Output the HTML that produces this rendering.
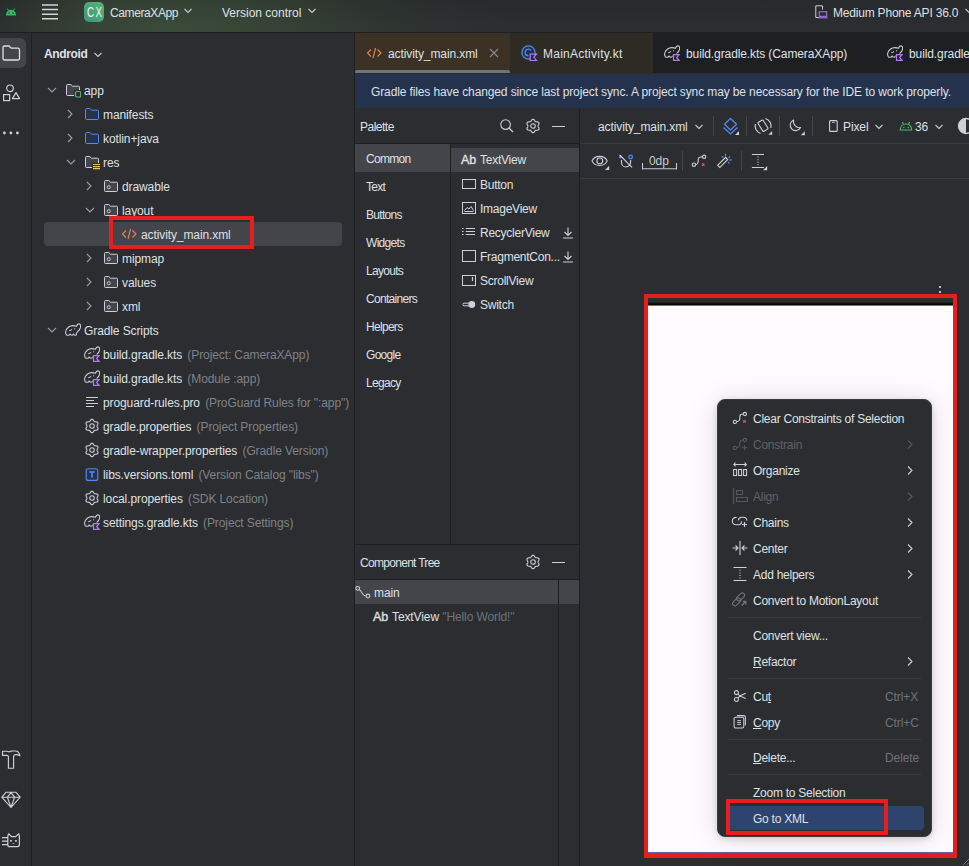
<!DOCTYPE html>
<html><head><meta charset="utf-8">
<style>
*{margin:0;padding:0;box-sizing:border-box}
html,body{width:969px;height:866px;overflow:hidden;background:#2b2d30;font-family:"Liberation Sans",sans-serif;font-size:12px;color:#dfe1e5}
.a{position:absolute}
.t{position:absolute;white-space:nowrap;line-height:14px;height:14px;letter-spacing:-0.1px}
.g{color:#7f838a;margin-left:2px}
.d{color:#6f737a}
svg{position:absolute;overflow:visible;color:#2b2d30}
</style></head><body>
<svg width="0" height="0" style="position:absolute">
<defs>
<symbol id="chd" viewBox="0 0 16 16"><path d="M4 6 L8 10 L12 6" fill="none" stroke="#9a9da3" stroke-width="1.1"/></symbol>
<symbol id="chr" viewBox="0 0 16 16"><path d="M6 4 L10 8 L6 12" fill="none" stroke="#9a9da3" stroke-width="1.1"/></symbol>
<symbol id="fold" viewBox="0 0 16 16"><path d="M1.5 3.5 a1 1 0 0 1 1-1 h3.3 l1.7 1.7 h6 a1 1 0 0 1 1 1 v7.3 a1 1 0 0 1 -1 1 h-11 a1 1 0 0 1 -1-1z" fill="#43454a" stroke="#ced0d6" stroke-width="1"/></symbol>
<symbol id="appf" viewBox="0 0 16 16"><path d="M1.5 3.5 a1 1 0 0 1 1-1 h3.3 l1.7 1.7 h6 a1 1 0 0 1 1 1 v7.3 a1 1 0 0 1 -1 1 h-11 a1 1 0 0 1 -1-1z" fill="#43454a" stroke="#ced0d6" stroke-width="1"/><rect x="9" y="8" width="8" height="8.5" fill="currentColor"/><rect x="10.5" y="9.5" width="5.2" height="5.5" rx="1.2" fill="currentColor" stroke="#5fb865" stroke-width="1.2"/></symbol>
<symbol id="bluef" viewBox="0 0 16 16"><path d="M1.5 3.5 a1 1 0 0 1 1-1 h3.3 l1.7 1.7 h6 a1 1 0 0 1 1 1 v7.3 a1 1 0 0 1 -1 1 h-11 a1 1 0 0 1 -1-1z" fill="#25324d" stroke="#548af7" stroke-width="1"/></symbol>
<symbol id="resf" viewBox="0 0 16 16"><path d="M1.5 3.5 a1 1 0 0 1 1-1 h3.3 l1.7 1.7 h6 a1 1 0 0 1 1 1 v7.3 a1 1 0 0 1 -1 1 h-11 a1 1 0 0 1 -1-1z" fill="#43454a" stroke="#ced0d6" stroke-width="1"/><rect x="8" y="9" width="9" height="7" fill="currentColor"/><path d="M9 10.5 h7 M9 12.6 h7 M9 14.6 h7" stroke="#f2c55c" stroke-width="1.1"/></symbol>
<symbol id="rfold" viewBox="0 0 16 16"><path d="M1.5 3.5 a1 1 0 0 1 1-1 h3.3 l1.7 1.7 h6 a1 1 0 0 1 1 1 v7.3 a1 1 0 0 1 -1 1 h-11 a1 1 0 0 1 -1-1z" fill="#43454a" stroke="#ced0d6" stroke-width="1"/><circle cx="5.7" cy="9.2" r="1.6" fill="none" stroke="#ced0d6" stroke-width="0.9"/></symbol>
<symbol id="xml" viewBox="0 0 16 16"><path d="M5 4.5 L1.5 8 L5 11.5 M11.5 4.5 L15 8 L11.5 11.5 M9.6 3 L7 13" fill="none" stroke="#e08855" stroke-width="1.1"/></symbol>
<symbol id="eleph" viewBox="0 0 16 16"><path d="M1.5 12 C1 9 3 6 6.5 5.5 C9 5.2 10 6 12 5.5 C13 3.5 15.5 3 15.5 5 C15.5 7 14 8 13 8.5 L13 7 M13 8.5 C12.5 10 12 11 11 12.5 L9.5 12.5 L9 10.5 C8 11 6.5 11 5.5 10.5 L5 12.5 L3.5 12.5 L3.5 11 M6 8 C7 7.5 8 8 8.5 7.5" fill="none" stroke="#ced0d6" stroke-width="1"/></symbol>
<symbol id="gradle" viewBox="0 0 16 16"><path d="M1.2 12.6 C0.2 10.5 0.8 7.2 3.6 5 C6 3.2 9 3.4 11.6 4.3 C12 2.4 13.4 1.6 14.6 2 C16 2.6 16 5.4 14.6 7.4 C13.6 8.8 12.3 9.8 11.6 10.8 L11.4 12.6 C10.4 13.6 9.2 13.6 8.6 11.9 C7.6 13.6 5.8 13.6 5.1 11.9 C4.2 13.6 2.2 13.6 1.2 12.6 Z M4.2 8.8 C5.2 8.6 6.2 8 7 7.3" fill="none" stroke="#ced0d6" stroke-width="1.05" stroke-linejoin="round"/><circle cx="9.6" cy="6.8" r="0.6" fill="#ced0d6"/></symbol>
<symbol id="gkts" viewBox="0 0 16 16"><g transform="translate(0 -1)"><path d="M1.2 12.6 C0.2 10.5 0.8 7.2 3.6 5 C6 3.2 9 3.4 11.6 4.3 C12 2.4 13.4 1.6 14.6 2 C16 2.6 16 5.4 14.6 7.4 C13.6 8.8 12.3 9.8 11.6 10.8 L11.4 12.6 C10.4 13.6 9.2 13.6 8.6 11.9 C7.6 13.6 5.8 13.6 5.1 11.9 C4.2 13.6 2.2 13.6 1.2 12.6 Z M4.2 8.8 C5.2 8.6 6.2 8 7 7.3" fill="none" stroke="#ced0d6" stroke-width="1.05" stroke-linejoin="round"/><circle cx="9.6" cy="6.8" r="0.6" fill="#ced0d6"/></g><path d="M8.6 8.6 H16.2 L13.4 12.5 L16.2 16.4 H8.6 Z" fill="currentColor"/><path d="M9.5 9.7 H15 L12.6 12.5 L15 15.3 H9.5 Z" fill="currentColor" stroke="#b07cf0" stroke-width="1.2"/></symbol>
<symbol id="lines" viewBox="0 0 16 16"><path d="M2 3.5 H14 M2 6.5 H10 M2 9.5 H14 M2 12.5 H10" stroke="#ced0d6" stroke-width="1"/></symbol>
<symbol id="gear" viewBox="0 0 16 16"><path d="M13.05 8.00 L13.14 8.45 L13.39 8.95 L13.70 9.53 L13.94 10.16 L14.01 10.80 L13.85 11.38 L13.44 11.81 L12.85 12.07 L12.17 12.17 L11.52 12.19 L10.96 12.23 L10.53 12.37 L10.18 12.68 L9.87 13.14 L9.53 13.70 L9.10 14.23 L8.58 14.61 L8.00 14.75 L7.42 14.61 L6.90 14.23 L6.47 13.70 L6.13 13.14 L5.82 12.68 L5.48 12.37 L5.04 12.23 L4.48 12.19 L3.83 12.17 L3.15 12.07 L2.56 11.81 L2.15 11.38 L1.99 10.80 L2.06 10.16 L2.30 9.53 L2.61 8.95 L2.86 8.45 L2.95 8.00 L2.86 7.55 L2.61 7.05 L2.30 6.47 L2.06 5.84 L1.99 5.20 L2.15 4.62 L2.56 4.19 L3.15 3.93 L3.83 3.83 L4.48 3.81 L5.04 3.77 L5.47 3.63 L5.82 3.32 L6.13 2.86 L6.47 2.30 L6.90 1.77 L7.42 1.39 L8.00 1.25 L8.58 1.39 L9.10 1.77 L9.53 2.30 L9.87 2.86 L10.18 3.32 L10.52 3.63 L10.96 3.77 L11.52 3.81 L12.17 3.83 L12.85 3.93 L13.44 4.19 L13.85 4.63 L14.01 5.20 L13.94 5.84 L13.70 6.47 L13.39 7.05 L13.14 7.55 L13.05 8.00Z" fill="none" stroke="#ced0d6" stroke-width="1.1" stroke-linejoin="round"/><circle cx="8" cy="8" r="2.3" fill="none" stroke="#ced0d6" stroke-width="1.05"/></symbol>
<symbol id="toml" viewBox="0 0 16 16"><rect x="2.2" y="2.8" width="11.6" height="11.6" rx="2" fill="#25324d" stroke="#548af7" stroke-width="1.1"/><path d="M5.2 6 H10.8 M8 6 V11.8" stroke="#548af7" stroke-width="1.6"/></symbol>
</defs></svg>

<!-- top bar -->
<div class="a" style="left:0;top:0;width:969px;height:32px;background:linear-gradient(90deg,#2c302f 0px,#313a32 40px,#374536 100px,#3a4a39 170px,#384636 250px,#323b33 340px,#2d3231 420px,#2b2d30 520px)"></div>
<div class="a" style="left:0;top:0;width:969px;height:32px;background:linear-gradient(180deg,rgba(20,22,24,0.16) 0px,rgba(20,22,24,0) 26px)"></div>
<div class="a" style="left:0;top:32px;width:969px;height:1px;background:#1e1f22"></div>
<svg style="left:5px;top:8px" width="12" height="8" viewBox="0 0 12 8"><path d="M1 7.5 C1 4 3.5 1.8 6 1.8 C8.5 1.8 11 4 11 7.5 Z" fill="#34b964"/><path d="M2.2 0.5 L3.8 2.8 M9.8 0.5 L8.2 2.8" stroke="#34b964" stroke-width="1"/><circle cx="4" cy="5" r="0.8" fill="#2e3a30"/><circle cx="8" cy="5" r="0.8" fill="#2e3a30"/></svg>
<svg style="left:42px;top:4px" width="16" height="16"><path d="M0 1 H16 M0 5.5 H16 M0 10.2 H16 M0 14.8 H16" stroke="#d4d6da" stroke-width="1.5"/></svg>
<div class="a" style="left:84px;top:2px;width:20px;height:20px;border-radius:5px;background:linear-gradient(45deg,#3b9886,#5ab36b)"></div>
<div class="t" style="left:86.6px;top:4.3px;height:16px;line-height:16px;color:#f4f6f4;font-size:14px;letter-spacing:2px;transform:scaleX(0.7);transform-origin:left">CX</div>
<div class="t" style="left:110px;top:6px;letter-spacing:-0.4px">CameraXApp</div>
<svg style="left:184px;top:8px" width="8" height="6"><path d="M0.5 1 L4 4.5 L7.5 1" fill="none" stroke="#c9cbcf" stroke-width="1.1"/></svg>
<div class="t" style="left:222px;top:6px;letter-spacing:0px">Version control</div>
<svg style="left:308px;top:8px" width="8" height="6"><path d="M0.5 1 L4 4.5 L7.5 1" fill="none" stroke="#c9cbcf" stroke-width="1.1"/></svg>
<svg style="left:815px;top:5px" width="14" height="14" viewBox="0 0 14 14"><path d="M4 12.5 H0.8 V0.8 H7.5 V4.5" fill="none" stroke="#ced0d6" stroke-width="1"/><rect x="4.2" y="6.8" width="7.5" height="4.5" fill="none" stroke="#b07cf0" stroke-width="1"/><path d="M3 12.8 H12.5" stroke="#b07cf0" stroke-width="1.1"/></svg>
<div class="t" style="left:833px;top:6px;letter-spacing:-0.2px">Medium Phone API 36.0</div>
<svg style="left:965px;top:8px" width="8" height="6"><path d="M0.5 1 L4 4.5 L7.5 1" fill="none" stroke="#c9cbcf" stroke-width="1.1"/></svg>

<!-- left strip -->
<div class="a" style="left:31px;top:33px;width:1px;height:833px;background:#1e1f22"></div>
<div class="a" style="left:-6px;top:38px;width:32px;height:30px;border-radius:6px;background:#43454a"></div>
<svg style="left:2px;top:45px" width="18" height="16" viewBox="0 0 18 16"><path d="M1 2.5 a1.5 1.5 0 0 1 1.5-1.5 h4.5 l2.2 2.2 h6.8 a1.5 1.5 0 0 1 1.5 1.5 v8.8 a1.5 1.5 0 0 1 -1.5 1.5 h-13.5 a1.5 1.5 0 0 1 -1.5-1.5z" fill="none" stroke="#dfe1e5" stroke-width="1.3"/></svg>
<svg style="left:2px;top:83px" width="20" height="20" viewBox="0 0 20 20"><circle cx="8" cy="5.3" r="3.3" fill="none" stroke="#ced0d6" stroke-width="1.2"/><rect x="1.6" y="11.6" width="6" height="6" fill="none" stroke="#ced0d6" stroke-width="1.2"/><path d="M14 9.6 L17.6 15.6 H10.4 Z" fill="none" stroke="#ced0d6" stroke-width="1.2" stroke-linejoin="round"/></svg>
<svg style="left:2px;top:131px" width="18" height="4"><circle cx="2.4" cy="2" r="1.4" fill="#ced0d6"/><circle cx="8.9" cy="2" r="1.4" fill="#ced0d6"/><circle cx="15.4" cy="2" r="1.4" fill="#ced0d6"/></svg>
<svg style="left:1px;top:750px" width="20" height="20" viewBox="0 0 20 20"><path d="M1.5 1.2 H5.5 C6.5 1.2 7.2 1.8 8.2 1.8 C9.2 1.8 10 1 11 1 H14.3 C16.8 1 18.4 3 19 5.8 C18 5 16.4 4.5 14.6 4.6 C13.6 4.7 12.6 5.3 12.6 6.3 V18.2 H7.4 V6.6 C7.4 5.8 6.6 5.4 5.5 5.4 H1.5 Z" fill="none" stroke="#ced0d6" stroke-width="1.15" stroke-linejoin="round"/></svg>
<svg style="left:1px;top:791px" width="20" height="18" viewBox="0 0 20 18"><path d="M5.2 1.2 H14.8 L19.2 6.2 L10 16.5 L0.8 6.2 Z M0.8 6.2 H19.2 M6.4 6.2 L10 1.6 L13.6 6.2 L10 16.5 Z" fill="none" stroke="#ced0d6" stroke-width="1.1" stroke-linejoin="round"/></svg>
<svg style="left:0px;top:833px" width="21" height="15" viewBox="0 0 21 15"><path d="M7.8 12.2 V3.2 L8.6 0.8 L11.6 3.6 H15.6 L18.8 0.8 L19.4 3.2 V11.6 Q19.4 13.6 17.4 13.6 H9.4 Q7.8 13.6 7.8 12.2 Z M2 4.6 H7.8 M2 8.1 H7.8 M2 11.6 H7.8" fill="none" stroke="#ced0d6" stroke-width="1.2" stroke-linejoin="round"/><rect x="10.1" y="7" width="1.7" height="1.7" fill="#ced0d6"/><rect x="15.1" y="7" width="1.7" height="1.7" fill="#ced0d6"/><path d="M12.3 9.9 H14.5 L13.4 11.1 Z" fill="#ced0d6"/></svg>

<!-- project panel -->
<div class="t" style="left:44px;top:47px;font-weight:bold;letter-spacing:-0.35px">Android</div>
<svg style="left:94px;top:52px" width="8" height="6"><path d="M0.5 1 L4 4.5 L7.5 1" fill="none" stroke="#c9cbcf" stroke-width="1.1"/></svg>
<div class="a" style="left:44px;top:222px;width:298px;height:24px;border-radius:4px;background:#43454a"></div>
<svg style="left:44px;top:82px" width="16" height="16"><use href="#chd"/></svg>
<svg style="left:65px;top:82px" width="16" height="16"><use href="#appf"/></svg>
<div class="t" style="left:84px;top:84px">app</div>
<svg style="left:62px;top:106px" width="16" height="16"><use href="#chr"/></svg>
<svg style="left:84px;top:106px" width="16" height="16"><use href="#bluef"/></svg>
<div class="t" style="left:103px;top:108px">manifests</div>
<svg style="left:62px;top:130px" width="16" height="16"><use href="#chr"/></svg>
<svg style="left:84px;top:130px" width="16" height="16"><use href="#bluef"/></svg>
<div class="t" style="left:103px;top:132px">kotlin+java</div>
<svg style="left:63px;top:154px" width="16" height="16"><use href="#chd"/></svg>
<svg style="left:84px;top:154px" width="16" height="16"><use href="#resf"/></svg>
<div class="t" style="left:103px;top:156px">res</div>
<svg style="left:81px;top:178px" width="16" height="16"><use href="#chr"/></svg>
<svg style="left:103px;top:178px" width="16" height="16"><use href="#rfold"/></svg>
<div class="t" style="left:122px;top:180px">drawable</div>
<svg style="left:82px;top:202px" width="16" height="16"><use href="#chd"/></svg>
<svg style="left:103px;top:202px" width="16" height="16"><use href="#rfold"/></svg>
<div class="t" style="left:122px;top:204px">layout</div>
<svg style="left:121px;top:226px" width="16" height="16"><use href="#xml"/></svg>
<div class="t" style="left:141px;top:228px">activity_main.xml</div>
<svg style="left:81px;top:250px" width="16" height="16"><use href="#chr"/></svg>
<svg style="left:103px;top:250px" width="16" height="16"><use href="#rfold"/></svg>
<div class="t" style="left:122px;top:252px">mipmap</div>
<svg style="left:81px;top:274px" width="16" height="16"><use href="#chr"/></svg>
<svg style="left:103px;top:274px" width="16" height="16"><use href="#rfold"/></svg>
<div class="t" style="left:122px;top:276px">values</div>
<svg style="left:81px;top:298px" width="16" height="16"><use href="#chr"/></svg>
<svg style="left:103px;top:298px" width="16" height="16"><use href="#rfold"/></svg>
<div class="t" style="left:122px;top:300px">xml</div>
<svg style="left:44px;top:322px" width="16" height="16"><use href="#chd"/></svg>
<svg style="left:65px;top:322px" width="16" height="16"><use href="#gradle"/></svg>
<div class="t" style="left:84px;top:324px">Gradle Scripts</div>
<svg style="left:84px;top:346px" width="16" height="16"><use href="#gkts"/></svg>
<div class="t" style="left:103px;top:348px">build.gradle.kts <span class="g">(Project: CameraXApp)</span></div>
<svg style="left:84px;top:370px" width="16" height="16"><use href="#gkts"/></svg>
<div class="t" style="left:103px;top:372px">build.gradle.kts <span class="g">(Module :app)</span></div>
<svg style="left:84px;top:394px" width="16" height="16"><use href="#lines"/></svg>
<div class="t" style="left:103px;top:396px">proguard-rules.pro <span class="g">(ProGuard Rules for ":app")</span></div>
<svg style="left:84px;top:418px" width="16" height="16"><use href="#gear"/></svg>
<div class="t" style="left:103px;top:420px">gradle.properties <span class="g">(Project Properties)</span></div>
<svg style="left:84px;top:442px" width="16" height="16"><use href="#gear"/></svg>
<div class="t" style="left:103px;top:444px">gradle-wrapper.properties <span class="g">(Gradle Version)</span></div>
<svg style="left:84px;top:466px" width="16" height="16"><use href="#toml"/></svg>
<div class="t" style="left:103px;top:468px">libs.versions.toml <span class="g">(Version Catalog "libs")</span></div>
<svg style="left:84px;top:490px" width="16" height="16"><use href="#gear"/></svg>
<div class="t" style="left:103px;top:492px">local.properties <span class="g">(SDK Location)</span></div>
<svg style="left:84px;top:514px" width="16" height="16"><use href="#gkts"/></svg>
<div class="t" style="left:103px;top:516px">settings.gradle.kts <span class="g">(Project Settings)</span></div><!-- project/editor separator -->
<div class="a" style="left:354px;top:33px;width:1px;height:833px;background:#1e1f22"></div>

<!-- editor tabs -->
<div class="a" style="left:355px;top:33px;width:614px;height:41px;background:#1e1f22"></div>
<div class="a" style="left:355px;top:33px;width:155px;height:40px;background:#3b3124"></div>
<div class="a" style="left:355px;top:70px;width:155px;height:3px;background:#6f737a;border-radius:2px 2px 0 0"></div>
<div class="a" style="left:510px;top:33px;width:143px;height:40px;background:#2e2a24"></div>
<div class="a" style="left:355px;top:73px;width:614px;height:1px;background:#2b2d30"></div>
<svg style="left:366px;top:45px" width="16" height="16"><use href="#xml"/></svg>
<div class="t" style="left:388px;top:47px">activity_main.xml</div>
<svg style="left:489px;top:48px" width="10" height="10"><path d="M1 1 L9 9 M9 1 L1 9" stroke="#868a91" stroke-width="1.1"/></svg>
<svg style="left:521px;top:45px" width="17" height="17" viewBox="0 0 17 17"><circle cx="7.5" cy="7.5" r="6.6" fill="#25324d" stroke="#548af7" stroke-width="1.2"/><path d="M10 5.8 A3.2 3.2 0 1 0 7.5 10.7" fill="none" stroke="#548af7" stroke-width="1.2"/><path d="M9.2 9.2 H15.5 L12.8 12 L15.5 15.5 H9.2 Z" fill="#2b2d30" stroke="#b07cf0" stroke-width="1.2"/></svg>
<div class="t" style="left:543px;top:47px;letter-spacing:0.25px">MainActivity.kt</div>
<svg style="left:664px;top:45px;color:#1e1f22" width="16" height="16"><use href="#gkts"/></svg>
<div class="t" style="left:686px;top:47px">build.gradle.kts (CameraXApp)</div>
<svg style="left:887px;top:45px;color:#1e1f22" width="16" height="16"><use href="#gkts"/></svg>
<div class="t" style="left:909px;top:47px">build.gradle.kts</div>

<!-- banner -->
<div class="a" style="left:355px;top:74px;width:614px;height:34px;background:#25324d"></div>
<div class="t" style="left:371px;top:85px;letter-spacing:-0.12px">Gradle files have changed since last project sync. A project sync may be necessary for the IDE to work properly.</div>

<!-- palette -->
<div class="t" style="left:360px;top:120px;letter-spacing:-0.5px">Palette</div>
<svg style="left:500px;top:119px" width="14" height="14" viewBox="0 0 14 14"><circle cx="5.6" cy="5.6" r="4.8" fill="none" stroke="#ced0d6" stroke-width="1.1"/><path d="M9 9 L13 13" stroke="#ced0d6" stroke-width="1.2"/></svg>
<svg style="left:525px;top:118px" width="16" height="16"><use href="#gear"/></svg>
<div class="a" style="left:552px;top:126px;width:13px;height:1.2px;background:#ced0d6"></div>
<div class="a" style="left:355px;top:143px;width:224px;height:1px;background:#1e1f22"></div>
<div class="a" style="left:450px;top:144px;width:1px;height:400px;background:#1e1f22"></div>
<div class="a" style="left:355px;top:144px;width:95px;height:28px;background:#43454a"></div>
<div class="a" style="left:451px;top:148px;width:128px;height:24px;background:#43454a"></div>
<div class="t" style="left:366px;top:152px;letter-spacing:-0.7px">Common</div>
<div class="t" style="left:366px;top:180px;letter-spacing:-0.7px">Text</div>
<div class="t" style="left:366px;top:208px;letter-spacing:-0.7px">Buttons</div>
<div class="t" style="left:366px;top:236px;letter-spacing:-0.7px">Widgets</div>
<div class="t" style="left:366px;top:264px;letter-spacing:-0.7px">Layouts</div>
<div class="t" style="left:366px;top:292px;letter-spacing:-0.7px">Containers</div>
<div class="t" style="left:366px;top:320px;letter-spacing:-0.7px">Helpers</div>
<div class="t" style="left:366px;top:348px;letter-spacing:-0.7px">Google</div>
<div class="t" style="left:366px;top:376px;letter-spacing:-0.7px">Legacy</div>

<div class="t" style="left:461px;top:153px;letter-spacing:0;-webkit-text-stroke:0.35px #dfe1e5;font-size:12.5px">Ab</div>
<div class="t" style="left:480px;top:153px;letter-spacing:-0.25px">TextView</div>
<svg style="left:462px;top:179px" width="14" height="10"><rect x="0.5" y="0.5" width="13" height="9" fill="none" stroke="#ced0d6" stroke-width="1"/></svg>
<div class="t" style="left:480px;top:178px;letter-spacing:-0.25px">Button</div>
<svg style="left:462px;top:202px" width="14" height="12" viewBox="0 0 14 12"><rect x="0.5" y="0.5" width="13" height="11" fill="none" stroke="#ced0d6" stroke-width="1"/><path d="M2.5 8.5 L5 5.5 L7 7 L9 4.5 L11.5 8.5" fill="none" stroke="#ced0d6" stroke-width="1"/><path d="M2.5 9.5 H11.5" stroke="#ced0d6"/></svg>
<div class="t" style="left:480px;top:202px;letter-spacing:-0.25px">ImageView</div>
<svg style="left:462px;top:227px" width="14" height="10" viewBox="0 0 14 10"><path d="M0 1.5 H1.6 M3.8 1.5 H13 M0 4.5 H1.6 M3.8 4.5 H13 M0 7.5 H1.6 M3.8 7.5 H13" stroke="#ced0d6" stroke-width="1"/></svg>
<div class="t" style="left:480px;top:226px;letter-spacing:-0.25px">RecyclerView</div>
<svg style="left:562px;top:227px" width="12" height="12" viewBox="0 0 12 12"><path d="M6 0.5 V8.5 M2.5 5 L6 8.5 L9.5 5 M1 11 H11" fill="none" stroke="#ced0d6" stroke-width="1.1"/></svg>
<svg style="left:462px;top:250px" width="14" height="12"><rect x="0.5" y="0.5" width="13" height="11" fill="none" stroke="#ced0d6" stroke-width="1"/></svg>
<div class="t" style="left:480px;top:250px;letter-spacing:-0.25px">FragmentCon...</div>
<svg style="left:562px;top:251px" width="12" height="12" viewBox="0 0 12 12"><path d="M6 0.5 V8.5 M2.5 5 L6 8.5 L9.5 5 M1 11 H11" fill="none" stroke="#ced0d6" stroke-width="1.1"/></svg>
<svg style="left:462px;top:275px" width="14" height="11" viewBox="0 0 14 11"><rect x="0.5" y="0.5" width="13" height="10" fill="none" stroke="#ced0d6" stroke-width="1"/><path d="M10.5 2 V6" stroke="#ced0d6" stroke-width="1.2"/></svg>
<div class="t" style="left:480px;top:274px;letter-spacing:-0.25px">ScrollView</div>
<svg style="left:462px;top:300px" width="14" height="9" viewBox="0 0 14 9"><rect x="0.8" y="3.2" width="8" height="2.6" rx="1.3" fill="none" stroke="#ced0d6" stroke-width="1"/><circle cx="9.8" cy="4.5" r="3.4" fill="#ced0d6"/></svg>
<div class="t" style="left:480px;top:298px;letter-spacing:-0.25px">Switch</div>

<!-- component tree -->
<div class="a" style="left:355px;top:544px;width:224px;height:1px;background:#1e1f22"></div>
<div class="t" style="left:360px;top:556px;letter-spacing:-0.7px">Component Tree</div>
<svg style="left:525px;top:554px" width="16" height="16"><use href="#gear"/></svg>
<div class="a" style="left:552px;top:562px;width:13px;height:1.2px;background:#ced0d6"></div>
<div class="a" style="left:355px;top:579px;width:224px;height:1px;background:#1e1f22"></div>
<div class="a" style="left:355px;top:580px;width:203px;height:24px;background:#43454a"></div>
<div class="a" style="left:559px;top:580px;width:20px;height:24px;background:#43454a"></div>
<div class="a" style="left:558px;top:580px;width:1px;height:286px;background:#1e1f22"></div>
<svg style="left:355px;top:585px" width="16" height="14" viewBox="0 0 16 14"><circle cx="2.7" cy="3.3" r="1.9" fill="none" stroke="#ced0d6" stroke-width="1.05"/><circle cx="13" cy="11" r="1.9" fill="none" stroke="#ced0d6" stroke-width="1.05"/><path d="M4.2 4.6 C6 5.5 6.5 7 7.5 8.8 C8.5 10.5 9.5 11 11.1 11" fill="none" stroke="#ced0d6" stroke-width="1.05"/></svg>
<div class="t" style="left:374px;top:586px">main</div>
<div class="t" style="left:373px;top:610px;letter-spacing:0;-webkit-text-stroke:0.35px #dfe1e5;font-size:12.5px">Ab</div>
<div class="t" style="left:392px;top:610px">TextView <span class="d">"Hello World!"</span></div>
<!-- palette/design divider -->
<div class="a" style="left:579px;top:108px;width:1px;height:758px;background:#1e1f22"></div>
<!-- design toolbar -->
<div class="a" style="left:580px;top:143px;width:389px;height:1px;background:#393b40"></div>
<div class="a" style="left:580px;top:178px;width:389px;height:1px;background:#393b40"></div>
<div class="t" style="left:598px;top:120px">activity_main.xml</div>
<svg style="left:695px;top:124px" width="8" height="6"><path d="M0.5 1 L4 4.5 L7.5 1" fill="none" stroke="#c9cbcf" stroke-width="1.1"/></svg>
<div class="a" style="left:713px;top:116px;width:1px;height:20px;background:#43454a"></div>
<svg style="left:722px;top:117px" width="18" height="19" viewBox="0 0 18 19"><path d="M8.5 1.5 L14.5 7.3 L8.5 13 L2.5 7.3 Z" fill="none" stroke="#548af7" stroke-width="1.2" stroke-linejoin="round"/><path d="M1.5 10.5 L8.5 17 L15.5 10.5" fill="none" stroke="#548af7" stroke-width="1.2"/><path d="M13 18 H17 V14 Z" fill="#ced0d6"/></svg>
<div class="a" style="left:746px;top:116px;width:1px;height:20px;background:#43454a"></div>
<svg style="left:754px;top:117px" width="19" height="19" viewBox="0 0 19 19"><rect x="6" y="3.45" width="6" height="10.5" rx="1" transform="rotate(-32 9 8.7)" fill="none" stroke="#ced0d6" stroke-width="1.1"/><path d="M1.5 7.2 A7.6 7.6 0 0 0 6.5 16.4 M11.4 1.5 A7.6 7.6 0 0 1 16.7 10.8" fill="none" stroke="#ced0d6" stroke-width="1.2"/><path d="M14.3 17.8 H18.2 V14 Z" fill="#ced0d6"/></svg>
<div class="a" style="left:779px;top:116px;width:1px;height:20px;background:#43454a"></div>
<svg style="left:788px;top:119px" width="17" height="17" viewBox="0 0 17 17"><path d="M5.6 1 A5.5 5.5 0 1 0 12.6 8.6 A6.2 6.2 0 0 1 5.6 1 Z" fill="none" stroke="#ced0d6" stroke-width="1.1" stroke-linejoin="round"/><path d="M12.8 16.2 H16.8 V12.2 Z" fill="#ced0d6"/></svg>
<div class="a" style="left:812px;top:116px;width:1px;height:20px;background:#43454a"></div>
<svg style="left:829px;top:120px" width="9" height="12" viewBox="0 0 9 12"><rect x="0.6" y="0.6" width="7.6" height="10.8" rx="1" fill="none" stroke="#ced0d6" stroke-width="1.1"/><path d="M3 2.3 H5.8" stroke="#ced0d6" stroke-width="0.9"/></svg>
<div class="t" style="left:843px;top:120px">Pixel</div>
<svg style="left:875px;top:124px" width="8" height="6"><path d="M0.5 1 L4 4.5 L7.5 1" fill="none" stroke="#c9cbcf" stroke-width="1.1"/></svg>
<svg style="left:899px;top:121px" width="14" height="10" viewBox="0 0 14 10"><path d="M1.2 9 C1.2 5.2 3.8 3 7 3 C10.2 3 12.8 5.2 12.8 9 Z" fill="none" stroke="#3dc070" stroke-width="1.2" stroke-linejoin="round"/><path d="M3.2 1 L4.6 3.3 M10.8 1 L9.4 3.3" stroke="#3dc070" stroke-width="1.1"/><circle cx="4.8" cy="6.4" r="0.75" fill="#3dc070"/><circle cx="9.2" cy="6.4" r="0.75" fill="#3dc070"/></svg>
<div class="t" style="left:915px;top:120px">36</div>
<svg style="left:935px;top:124px" width="8" height="6"><path d="M0.5 1 L4 4.5 L7.5 1" fill="none" stroke="#c9cbcf" stroke-width="1.1"/></svg>
<svg style="left:957px;top:117px" width="18" height="18" viewBox="0 0 18 18"><circle cx="9" cy="9" r="7.5" fill="none" stroke="#ced0d6" stroke-width="1.3"/><path d="M9 1.5 A7.5 7.5 0 0 0 9 16.5 Z" fill="#ced0d6"/></svg>

<svg style="left:591px;top:154px" width="19" height="17" viewBox="0 0 19 17"><path d="M1 6.9 C3.6 0.8 13.6 0.8 16.2 6.9 C13.6 13 3.6 13 1 6.9 Z" fill="none" stroke="#ced0d6" stroke-width="1.1"/><circle cx="8.8" cy="6.9" r="2.9" fill="none" stroke="#ced0d6" stroke-width="1.1"/><path d="M14 15.9 H18.2 V11.8 Z" fill="#ced0d6"/></svg>
<svg style="left:618px;top:154px" width="16" height="16" viewBox="0 0 16 16"><path d="M3.5 5.9 V8.5 A4.5 4.5 0 0 0 12.5 8.5 M12.6 5.9 V9" fill="none" stroke="#ced0d6" stroke-width="1.1"/><circle cx="2.6" cy="2.9" r="1.6" fill="#548af7"/><path d="M1.6 0.8 L14 13.3" stroke="#ced0d6" stroke-width="1.2"/><circle cx="12.6" cy="3" r="1.8" fill="none" stroke="#548af7" stroke-width="1.3"/></svg>
<div class="t" style="left:649px;top:154px;color:#c9cbcf">0dp</div>
<svg style="left:642px;top:163px" width="36" height="8" viewBox="0 0 36 8"><path d="M0.5 0 V6.5 M34.5 0 V6.5 M0.5 5.8 H34.5" fill="none" stroke="#c4c6ca" stroke-width="1.1"/></svg>
<div class="a" style="left:682px;top:151px;width:1px;height:20px;background:#43454a"></div>
<svg style="left:691px;top:154px" width="16" height="16" viewBox="0 0 16 16"><circle cx="2.9" cy="10.7" r="1.7" fill="none" stroke="#ced0d6" stroke-width="1.1"/><circle cx="13.1" cy="2.8" r="1.7" fill="none" stroke="#ced0d6" stroke-width="1.1"/><path d="M4.6 10.6 C6.5 10.5 6.8 9.8 7 8.5 L7.3 5 C7.5 3.5 9 2.9 11.4 2.8" fill="none" stroke="#ced0d6" stroke-width="1.1"/><path d="M11 9.5 L13.4 11.9 M13.4 9.5 L11 11.9" stroke="#e55765" stroke-width="1.1"/></svg>
<svg style="left:718px;top:153px" width="16" height="16" viewBox="0 0 16 16"><rect x="-0.9" y="7.9" width="11.2" height="3" transform="rotate(-45 4.7 9.4)" fill="none" stroke="#ced0d6" stroke-width="1.1"/><path d="M7.5 0.8 V3.3 M3.9 3.3 L5.4 4.6 M10.5 4.8 L12 3.3 M11.2 7 H14 M10.2 8.9 L11.5 10.7" stroke="#548af7" stroke-width="1.2"/></svg>
<div class="a" style="left:741px;top:151px;width:1px;height:20px;background:#43454a"></div>
<svg style="left:751px;top:153px" width="17" height="18" viewBox="0 0 17 18"><path d="M0.9 1.5 H13 M0.9 14.5 H13" stroke="#ced0d6" stroke-width="1.2"/><path d="M7 3.6 V4.6 M7 6.2 V7.2 M7 8.8 V9.8 M7 11.3 V12.3" stroke="#ced0d6" stroke-width="1.1"/><path d="M12 17.3 H16.2 V13 Z" fill="#ced0d6"/></svg>

<!-- phone -->
<div class="a" style="left:939px;top:286px;width:2px;height:2px;background:#bbbdc1"></div>
<div class="a" style="left:939px;top:291px;width:2px;height:2px;background:#bbbdc1"></div>
<div class="a" style="left:644px;top:294px;width:313px;height:564px;background:#e61e1e"></div>
<div class="a" style="left:648px;top:298px;width:305px;height:555px;background:#fffbfe"></div>
<div class="a" style="left:648px;top:298px;width:305px;height:7px;background:linear-gradient(#2b2d30 0,#2b2d30 4px,#050505 6px)"></div>
<div class="a" style="left:648px;top:305px;width:305px;height:1px;background:#1e88e5"></div>
<div class="a" style="left:648px;top:852px;width:305px;height:1px;background:#6a5fa0"></div>
<!-- context menu -->
<div class="a" style="left:717px;top:399px;width:215px;height:438px;border-radius:8px;background:#2b2d30;border:1px solid #393b40;box-shadow:0 2px 30px rgba(0,0,0,0.13),0 2px 6px rgba(0,0,0,0.15)"></div>
<svg style="left:732px;top:410px" width="17" height="16" viewBox="0 0 17 16"><circle cx="2.9" cy="11.9" r="1.6" fill="none" stroke="#ced0d6" stroke-width="1.1"/><circle cx="12.9" cy="4" r="1.6" fill="none" stroke="#ced0d6" stroke-width="1.1"/><path d="M4.5 11.6 C6 11.4 7.4 11.2 7.6 10 L8 5.8 C8.2 4.5 9 4 11.2 4" fill="none" stroke="#ced0d6" stroke-width="1.1"/><path d="M11.2 10.1 L13.8 12.7 M13.8 10.1 L11.2 12.7" stroke="#e55765" stroke-width="1.1"/></svg>
<div class="t" style="left:753px;top:412px;letter-spacing:-0.25px">Clear Constraints of Selection</div>
<svg style="left:732px;top:436px" width="17" height="16" viewBox="0 0 17 16"><circle cx="2.9" cy="11.9" r="1.6" fill="none" stroke="#55585e" stroke-width="1.1"/><circle cx="12.9" cy="4" r="1.6" fill="none" stroke="#55585e" stroke-width="1.1"/><path d="M4.5 11.6 C6 11.4 7.4 11.2 7.6 10 L8 5.8 C8.2 4.5 9 4 11.2 4" fill="none" stroke="#55585e" stroke-width="1.1"/><path d="M12.5 9.3 V14.3 M10 11.8 H15" stroke="#55585e" stroke-width="1.1"/></svg>
<div class="t" style="left:753px;top:438px;color:#5f6268;letter-spacing:-0.25px">Constrain</div>
<svg style="left:733px;top:462px" width="15" height="15" viewBox="0 0 15 15"><path d="M0.8 2.5 H13.4 M2.6 0.7 L0.8 2.5 L2.6 4.3 M11.6 0.7 L13.4 2.5 L11.6 4.3" fill="none" stroke="#ced0d6" stroke-width="1.05"/><rect x="0.6" y="7.5" width="3" height="6" fill="none" stroke="#ced0d6" stroke-width="1.05"/><rect x="5.6" y="7.5" width="3" height="6" fill="none" stroke="#ced0d6" stroke-width="1.05"/><rect x="10.6" y="7.5" width="3" height="6" fill="none" stroke="#ced0d6" stroke-width="1.05"/></svg>
<div class="t" style="left:753px;top:464px;letter-spacing:-0.25px">Organize</div>
<svg style="left:733px;top:488px" width="15" height="16" viewBox="0 0 15 16"><path d="M0.6 0 V16" stroke="#55585e" stroke-width="1.1"/><rect x="3.5" y="2.5" width="6" height="4" fill="none" stroke="#55585e" stroke-width="1.1"/><rect x="3.5" y="9.5" width="11" height="4" fill="none" stroke="#55585e" stroke-width="1.1"/></svg>
<div class="t" style="left:753px;top:490px;color:#5f6268;letter-spacing:-0.25px">Align</div>
<svg style="left:732px;top:514px" width="17" height="16" viewBox="0 0 17 16"><path d="M4.6 3.4 H4 A3.7 3.7 0 0 0 4 10.8 H6.2 A3.6 3.6 0 0 0 9.6 7.2" fill="none" stroke="#ced0d6" stroke-width="1.1"/><path d="M6.3 6.4 A3.6 3.6 0 0 1 9.6 3.3 H11.4 A3.6 3.6 0 0 1 14.9 6.6" fill="none" stroke="#ced0d6" stroke-width="1.1"/><path d="M12.5 8 V13 M10 10.5 H15" stroke="#ced0d6" stroke-width="1.2"/></svg>
<div class="t" style="left:753px;top:516px;letter-spacing:-0.25px">Chains</div>
<svg style="left:732px;top:540px" width="16" height="16" viewBox="0 0 16 16"><path d="M8 1 V15" stroke="#ced0d6" stroke-width="1.1"/><path d="M0.5 8 H6 M3.5 5.5 L6 8 L3.5 10.5 M15.5 8 H10 M12.5 5.5 L10 8 L12.5 10.5" fill="none" stroke="#ced0d6" stroke-width="1.1"/></svg>
<div class="t" style="left:753px;top:542px;letter-spacing:-0.25px">Center</div>
<svg style="left:733px;top:566px" width="14" height="16" viewBox="0 0 14 16"><path d="M0.5 1.5 H13.5 M0.5 14.5 H13.5" stroke="#ced0d6" stroke-width="1.1"/><path d="M7 3.8 V4.8 M7 6.4 V7.4 M7 9 V10 M7 11.5 V12.5" stroke="#ced0d6" stroke-width="1.1"/></svg>
<div class="t" style="left:753px;top:568px;letter-spacing:-0.25px">Add helpers</div>
<svg style="left:732px;top:592px" width="16" height="16" viewBox="0 0 16 16"><rect x="6.3" y="0.2" width="4.6" height="9.4" rx="2.3" transform="rotate(45 8.6 4.9)" fill="none" stroke="#6f737a" stroke-width="1.1"/><rect x="2.3" y="5.2" width="4.6" height="9.4" rx="2.3" transform="rotate(45 4.6 9.9)" fill="none" stroke="#6f737a" stroke-width="1.1"/><path d="M9.6 13.6 L13.6 9.6 M10.8 9.4 H13.8 V12.4" fill="none" stroke="#6f737a" stroke-width="1.4"/></svg>
<div class="t" style="left:753px;top:594px;letter-spacing:-0.25px">Convert to MotionLayout</div>
<div class="a" style="left:728px;top:617px;width:193px;height:1px;background:#393b40"></div>
<div class="t" style="left:753px;top:629px;letter-spacing:-0.25px">Convert view...</div>
<div class="t" style="left:753px;top:655px;letter-spacing:-0.25px"><u>R</u>efactor</div>
<div class="a" style="left:728px;top:678px;width:193px;height:1px;background:#393b40"></div>
<svg style="left:732px;top:689px" width="15" height="14" viewBox="0 0 15 14"><circle cx="4.4" cy="3.6" r="2" fill="none" stroke="#ced0d6" stroke-width="1.05"/><circle cx="4.4" cy="10.5" r="2" fill="none" stroke="#ced0d6" stroke-width="1.05"/><path d="M6.1 4.8 L7.6 6.95 L13.8 9.6 M6.1 9.2 L7.6 6.95 L13.8 4.3" fill="none" stroke="#ced0d6" stroke-width="1.05"/></svg>
<div class="t" style="left:753px;top:690px;letter-spacing:-0.25px">Cu<u>t</u></div>
<div class="t d" style="left:885px;top:690px">Ctrl+X</div>
<svg style="left:733px;top:715px" width="14" height="15" viewBox="0 0 14 15"><rect x="1.1" y="2.2" width="9.7" height="10.8" rx="1.5" fill="none" stroke="#ced0d6" stroke-width="1.05"/><path d="M3.9 0.6 H11 Q12.4 0.6 12.4 2 V10.2" fill="none" stroke="#ced0d6" stroke-width="1.05"/><path d="M4.2 5.6 H8 M4.2 7.5 H8 M4.2 9.4 H8" stroke="#ced0d6" stroke-width="0.95"/></svg>
<div class="t" style="left:753px;top:716px;letter-spacing:-0.25px"><u>C</u>opy</div>
<div class="t d" style="left:885px;top:716px">Ctrl+C</div>
<div class="a" style="left:728px;top:739px;width:193px;height:1px;background:#393b40"></div>
<div class="t" style="left:753px;top:751px;letter-spacing:-0.25px"><u>D</u>elete...</div>
<div class="t d" style="left:885px;top:751px">Delete</div>
<div class="a" style="left:728px;top:774px;width:193px;height:1px;background:#393b40"></div>
<div class="t" style="left:753px;top:786px;letter-spacing:-0.25px">Zoom to Selection</div>
<div class="a" style="left:726px;top:806px;width:198px;height:24px;border-radius:4px;background:#2e436e"></div>
<div class="t" style="left:753px;top:812px;letter-spacing:-0.25px">Go to XML</div>
<div class="a" style="left:726px;top:799px;width:162px;height:36px;border:4px solid #e61e1e"></div>
<!-- chevrons -->
<svg style="left:907px;top:440px" width="6" height="9"><path d="M1 0.5 L5 4.5 L1 8.5" fill="none" stroke="#55585e" stroke-width="1.1"/></svg>
<svg style="left:907px;top:466px" width="6" height="9"><path d="M1 0.5 L5 4.5 L1 8.5" fill="none" stroke="#ced0d6" stroke-width="1.1"/></svg>
<svg style="left:907px;top:492px" width="6" height="9"><path d="M1 0.5 L5 4.5 L1 8.5" fill="none" stroke="#55585e" stroke-width="1.1"/></svg>
<svg style="left:907px;top:518px" width="6" height="9"><path d="M1 0.5 L5 4.5 L1 8.5" fill="none" stroke="#ced0d6" stroke-width="1.1"/></svg>
<svg style="left:907px;top:544px" width="6" height="9"><path d="M1 0.5 L5 4.5 L1 8.5" fill="none" stroke="#ced0d6" stroke-width="1.1"/></svg>
<svg style="left:907px;top:570px" width="6" height="9"><path d="M1 0.5 L5 4.5 L1 8.5" fill="none" stroke="#ced0d6" stroke-width="1.1"/></svg>
<svg style="left:907px;top:657px" width="6" height="9"><path d="M1 0.5 L5 4.5 L1 8.5" fill="none" stroke="#ced0d6" stroke-width="1.1"/></svg>

<!-- red box in tree -->
<div class="a" style="left:109px;top:216px;width:145px;height:33px;border:4px solid #e61e1e"></div>
<!-- resize handle -->
<svg style="left:962px;top:858px" width="8" height="8"><path d="M7 1 L1 7 M7 4.5 L4.5 7" stroke="#6f737a" stroke-width="1"/></svg>
</body></html>
